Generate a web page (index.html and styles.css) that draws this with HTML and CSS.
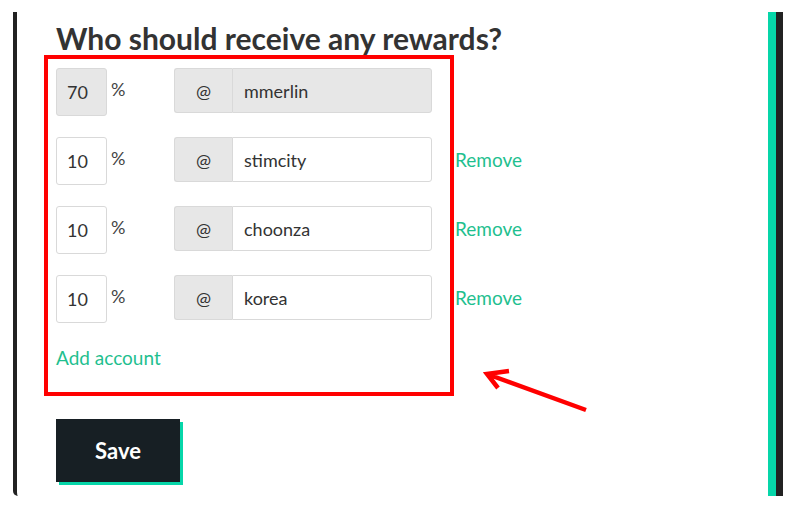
FILE: index.html
```html
<!DOCTYPE html>
<html lang="en">
<head>
    <meta charset="UTF-8">
    <meta name="viewport" content="width=device-width, initial-scale=1.0">
    <title>Beneficiaries</title>
    <link rel="stylesheet" href="styles.css">
</head>
<body>
    <div class="frame">
        <div class="card">
            <h2>Who should receive any rewards?</h2>

            <div class="row">
                <input class="pct" type="text" value="70" disabled>
                <span class="pct-sign">%</span>
                <div class="group">
                    <span class="addon">@</span>
                    <input class="account" type="text" value="mmerlin" disabled>
                </div>
            </div>

            <div class="row">
                <input class="pct" type="text" value="10">
                <span class="pct-sign">%</span>
                <div class="group">
                    <span class="addon">@</span>
                    <input class="account" type="text" value="stimcity">
                </div>
                <a class="link remove" href="#">Remove</a>
            </div>

            <div class="row">
                <input class="pct" type="text" value="10">
                <span class="pct-sign">%</span>
                <div class="group">
                    <span class="addon">@</span>
                    <input class="account" type="text" value="choonza">
                </div>
                <a class="link remove" href="#">Remove</a>
            </div>

            <div class="row">
                <input class="pct" type="text" value="10">
                <span class="pct-sign">%</span>
                <div class="group">
                    <span class="addon">@</span>
                    <input class="account" type="text" value="korea">
                </div>
                <a class="link remove" href="#">Remove</a>
            </div>

            <a class="link add" href="#">Add account</a>

            <button class="save" type="button">Save</button>
        </div>
    </div>

    <!-- annotation drawn over the screenshot -->
    <div class="highlight"></div>
    <svg class="arrow" width="120" height="60" viewBox="0 0 120 60">
        <path d="M104 49 L5 13 M27 10 L5 13 L16 27" fill="none" stroke="#ff0000" stroke-width="4.5" stroke-linecap="butt" stroke-linejoin="miter"/>
    </svg>
</body>
</html>
```

FILE: styles.css
```css
body {
    margin: 0;
    background-color: #ffffff;
    font-family: Lato, "Open Sans", Arial, sans-serif;
    color: #333;
    position: relative;
}
.frame {
    margin: 12px 0 0 13px;
    width: 770px;
    border-left: 4px solid #222;
    border-right: 7px solid #222;
    border-bottom-left-radius: 5px;
    box-sizing: border-box;
}
.card {
    border-right: 8px solid #06d6a9;
    padding: 8px 0 14px 39px;
}
h2 {
    margin: 0 0 12px 0;
    font-size: 30px;
    line-height: 36px;
    font-weight: 700;
    color: #333;
}
.row {
    display: flex;
    align-items: flex-start;
    height: 48px;
    margin-bottom: 21px;
}
input {
    font-family: inherit;
    font-size: 18px;
    color: #333;
    border: 1px solid #d9d9d9;
    background-color: #fff;
    box-sizing: border-box;
    margin: 0;
    outline: none;
}
input:disabled {
    background-color: #e7e7e7;
    color: #333;
}
.pct {
    flex: none;
    width: 51px;
    height: 48px;
    padding: 0 0 0 10px;
    border-radius: 3px;
}
.pct-sign {
    flex: none;
    width: 63px;
    padding: 8px 0 0 4px;
    font-size: 18px;
    line-height: 27px;
    color: #444;
}
.group {
    flex: none;
    display: flex;
    height: 45px;
    width: 258px;
}
.addon {
    flex: none;
    width: 58px;
    display: flex;
    align-items: center;
    justify-content: center;
    background-color: #e7e7e7;
    border: 1px solid #d9d9d9;
    border-right: none;
    border-radius: 3px 0 0 3px;
    box-sizing: border-box;
    font-size: 18px;
    color: #333;
}
.account {
    flex: 1;
    min-width: 0;
    height: 45px;
    padding: 0 0 0 11px;
    border-radius: 0 3px 3px 0;
}
.link {
    color: #1fbf8f;
    text-decoration: none;
    font-size: 19px;
}
.remove {
    margin-left: 23px;
    line-height: 45px;
}
.add {
    display: block;
    width: max-content;
    line-height: 27px;
}
.save {
    display: block;
    margin-top: 48px;
    width: 124px;
    height: 63px;
    border: none;
    background-color: #171f24;
    color: #fff;
    font-family: inherit;
    font-size: 22px;
    font-weight: 700;
    box-shadow: 3px 3px 0 #06d6a9;
    cursor: pointer;
}
.highlight {
    position: absolute;
    left: 44px;
    top: 55px;
    width: 410px;
    height: 341px;
    border: 4px solid #ff0000;
    box-sizing: border-box;
}
.arrow {
    position: absolute;
    left: 482px;
    top: 361px;
}
```
